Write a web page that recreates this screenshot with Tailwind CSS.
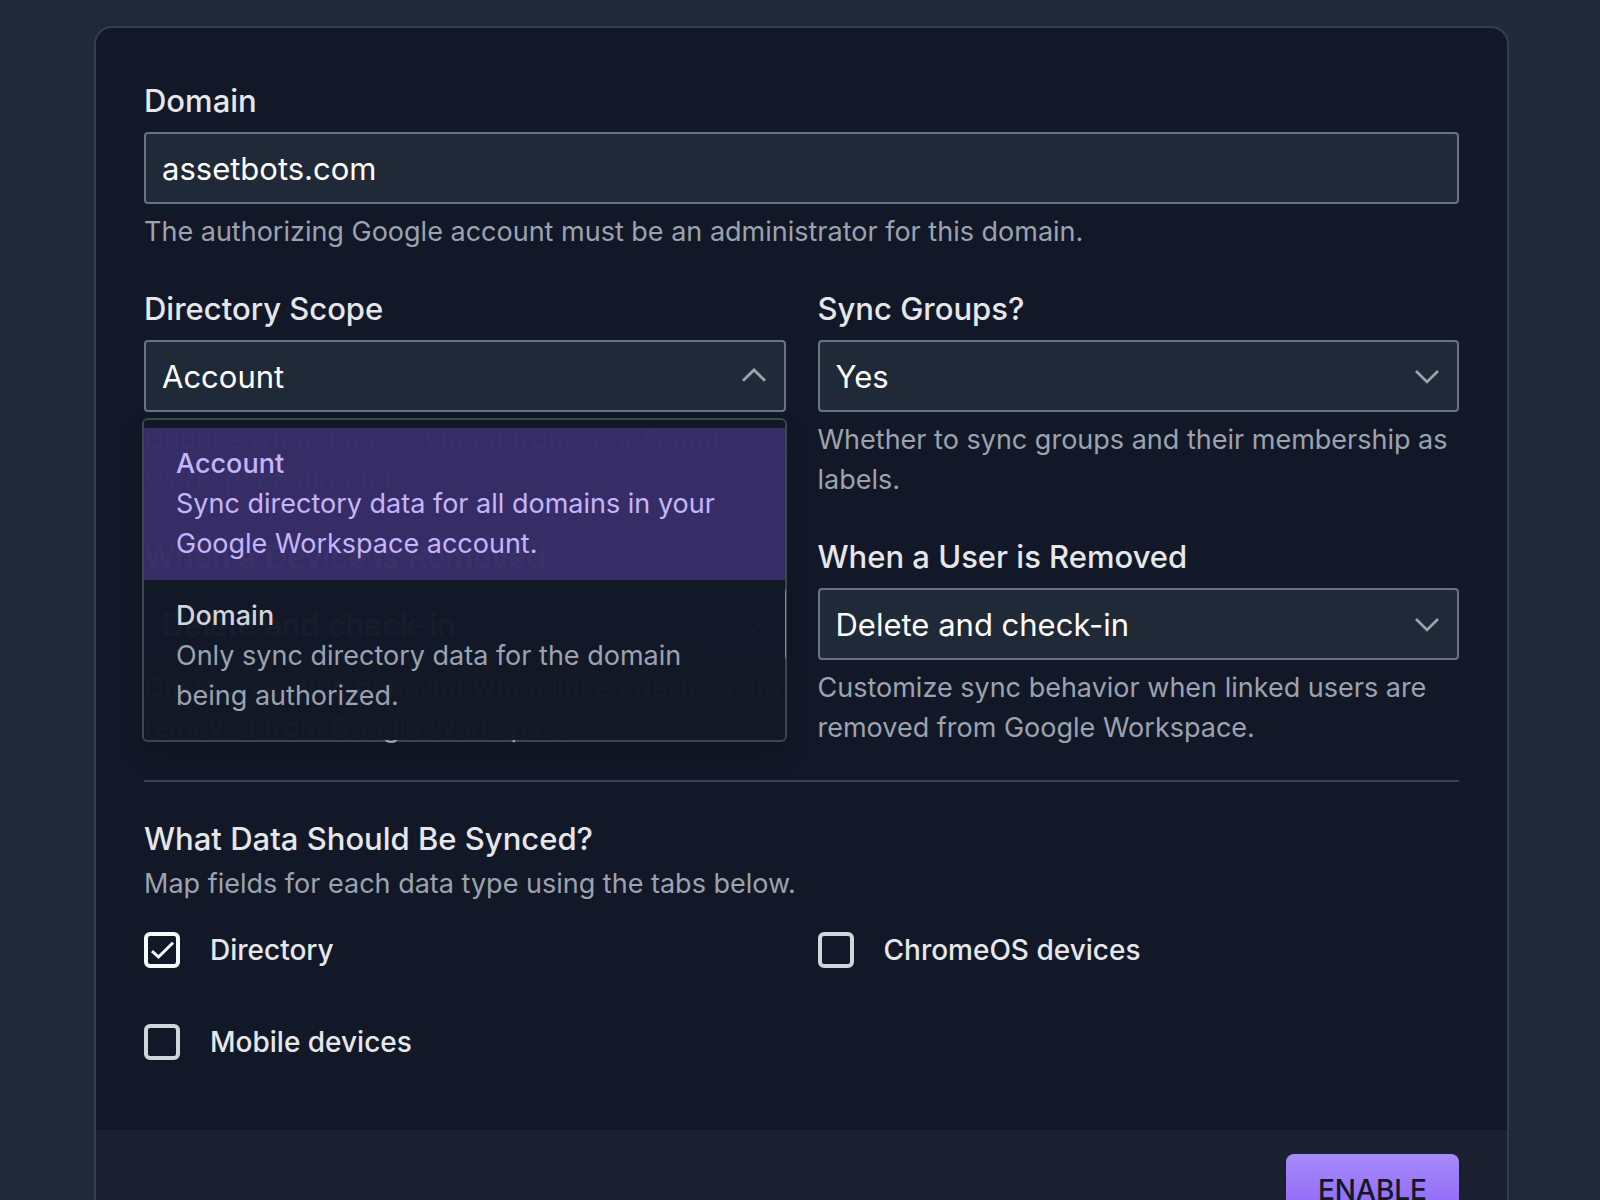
<!DOCTYPE html>
<html lang="en">
  <head>
    <meta charset="UTF-8" />
    <meta name="viewport" content="width=device-width, initial-scale=1.0" />
    <title>Google Workspace Integration</title>
    <script src="https://cdn.jsdelivr.net/npm/@tailwindcss/browser@4"></script>
  </head>
  <body class="h-screen overflow-x-hidden overflow-y-auto bg-[#202937] pt-[26px] pr-[91px] pl-[94px] font-['Inter',sans-serif] text-[27px] leading-10 text-[#9ca3af]">
    <form class="rounded-[18px] border-2 border-[#343e4a] bg-[#121827]">
      <div class="px-12 pt-12 pb-17">
        <!-- Domain -->
        <div>
          <label for="domain" class="mb-1.5 block text-[31px] leading-[50px] font-medium text-[#e5e7eb]">Domain</label>
          <input
            id="domain"
            type="text"
            value="assetbots.com"
            class="block h-18 w-full rounded-sm border-2 border-[#6b7280] bg-[#202937] px-4 text-[31px] text-white"
          />
          <p class="mt-2">The authorizing Google account must be an administrator for this domain.</p>
        </div>

        <!-- Sync settings -->
        <div class="mt-8 grid grid-cols-2 gap-8">
          <div>
            <label for="scope" class="mb-1.5 block text-[31px] leading-[50px] font-medium text-[#e5e7eb]">Directory Scope</label>
            <div class="relative">
              <select id="scope" class="block h-18 w-full appearance-none rounded-sm border-2 border-[#6b7280] bg-[#202937] px-4 pt-0.5 text-[31px] text-white">
                <option>Account</option>
                <option>Domain</option>
              </select>
              <svg class="pointer-events-none absolute top-7 right-5 h-3.5 w-6" viewBox="0 0 24 14" fill="none" stroke="#9ca3af" stroke-width="2.8">
                <path d="M1 12.8 12 1.9 23 12.8" />
              </svg>

              <!-- Open option list -->
              <ul role="listbox" aria-label="Directory Scope" class="absolute top-20 right-px left-0 z-10 rounded-sm bg-[#121827]/98 py-2 shadow-[0_0_0_2px_rgba(255,255,255,0.2),0_12px_24px_rgba(0,0,0,0.15)]">
                <li role="option" aria-selected="true" class="bg-[#8b5cf6]/31 px-8 py-4 text-[#c4b5fd]">
                  <p class="font-medium">Account</p>
                  <p>Sync directory data for all domains in your Google Workspace account.</p>
                </li>
                <li role="option" aria-selected="false" class="px-8 py-4">
                  <p class="font-medium text-[#d1d5db]">Domain</p>
                  <p>Only sync directory data for the domain being authorized.</p>
                </li>
              </ul>
            </div>
            <p class="mt-2">Choose what data is synced from your Google Workspace directory.</p>
          </div>

          <div>
            <label for="groups" class="mb-1.5 block text-[31px] leading-[50px] font-medium text-[#e5e7eb]">Sync Groups?</label>
            <div class="relative">
              <select id="groups" class="block h-18 w-full appearance-none rounded-sm border-2 border-[#6b7280] bg-[#202937] px-4 pt-0.5 text-[31px] text-white">
                <option>Yes</option>
                <option>No</option>
              </select>
              <svg class="pointer-events-none absolute top-[30px] right-5 h-3.5 w-6" viewBox="0 0 24 14" fill="none" stroke="#9ca3af" stroke-width="2.8">
                <path d="M1 1 12 11.9 23 1" />
              </svg>
            </div>
            <p class="mt-2">Whether to sync groups and their membership as labels.</p>
          </div>

          <div>
            <label for="device-removed" class="mb-1.5 block text-[31px] leading-[50px] font-medium text-[#e5e7eb]">When a Device is Removed</label>
            <div class="relative">
              <select id="device-removed" class="block h-18 w-full appearance-none rounded-sm border-2 border-[#6b7280] bg-[#202937] px-4 pt-0.5 text-[31px] text-white">
                <option>Delete and check-in</option>
              </select>
              <svg class="pointer-events-none absolute top-[30px] right-5 h-3.5 w-6" viewBox="0 0 24 14" fill="none" stroke="#9ca3af" stroke-width="2.8">
                <path d="M1 1 12 11.9 23 1" />
              </svg>
            </div>
            <p class="mt-2">Customize sync behavior when linked devices are removed from Google Workspace.</p>
          </div>

          <div>
            <label for="user-removed" class="mb-1.5 block text-[31px] leading-[50px] font-medium text-[#e5e7eb]">When a User is Removed</label>
            <div class="relative">
              <select id="user-removed" class="block h-18 w-full appearance-none rounded-sm border-2 border-[#6b7280] bg-[#202937] px-4 pt-0.5 text-[31px] text-white">
                <option>Delete and check-in</option>
              </select>
              <svg class="pointer-events-none absolute top-[30px] right-5 h-3.5 w-6" viewBox="0 0 24 14" fill="none" stroke="#9ca3af" stroke-width="2.8">
                <path d="M1 1 12 11.9 23 1" />
              </svg>
            </div>
            <p class="mt-2">Customize sync behavior when linked users are removed from Google Workspace.</p>
          </div>
        </div>

        <hr class="my-8 border-t-2 border-[#374151]" />

        <!-- Data types -->
        <h2 class="text-[31px] leading-[50px] font-medium text-[#e5e7eb]">What Data Should Be Synced?</h2>
        <p>Map fields for each data type using the tabs below.</p>
        <div class="mt-[26px] grid grid-cols-2 gap-x-8 gap-y-13 text-[28px] font-medium text-[#e5e7eb]">
          <label class="flex items-center gap-[30px]">
            <span class="relative flex">
              <input type="checkbox" checked class="peer size-9 appearance-none rounded-md border-4 border-[#d1d5db] checked:border-[#f9fafb]" />
              <svg class="pointer-events-none absolute inset-0 hidden size-9 peer-checked:block" viewBox="0 0 36 36" fill="none" stroke="#f9fafb" stroke-width="3">
                <path d="M8 19.2 14.5 25 29 10.8" />
              </svg>
            </span>
            Directory
          </label>
          <label class="flex items-center gap-[30px]">
            <input type="checkbox" class="size-9 appearance-none rounded-md border-4 border-[#d1d5db] checked:border-[#f9fafb]" />
            ChromeOS devices
          </label>
          <label class="flex items-center gap-[30px]">
            <input type="checkbox" class="size-9 appearance-none rounded-md border-4 border-[#d1d5db] checked:border-[#f9fafb]" />
            Mobile devices
          </label>
        </div>
      </div>

      <!-- Footer -->
      <div class="flex justify-end rounded-b-[16px] bg-[#1b2130] px-12 py-6">
        <button type="submit" class="h-18 rounded-lg bg-linear-to-b from-[#a78bfa] to-[#8b5cf6] px-8 text-[28px] font-medium text-[#121827] shadow-md">ENABLE</button>
      </div>
    </form>
  </body>
</html>
